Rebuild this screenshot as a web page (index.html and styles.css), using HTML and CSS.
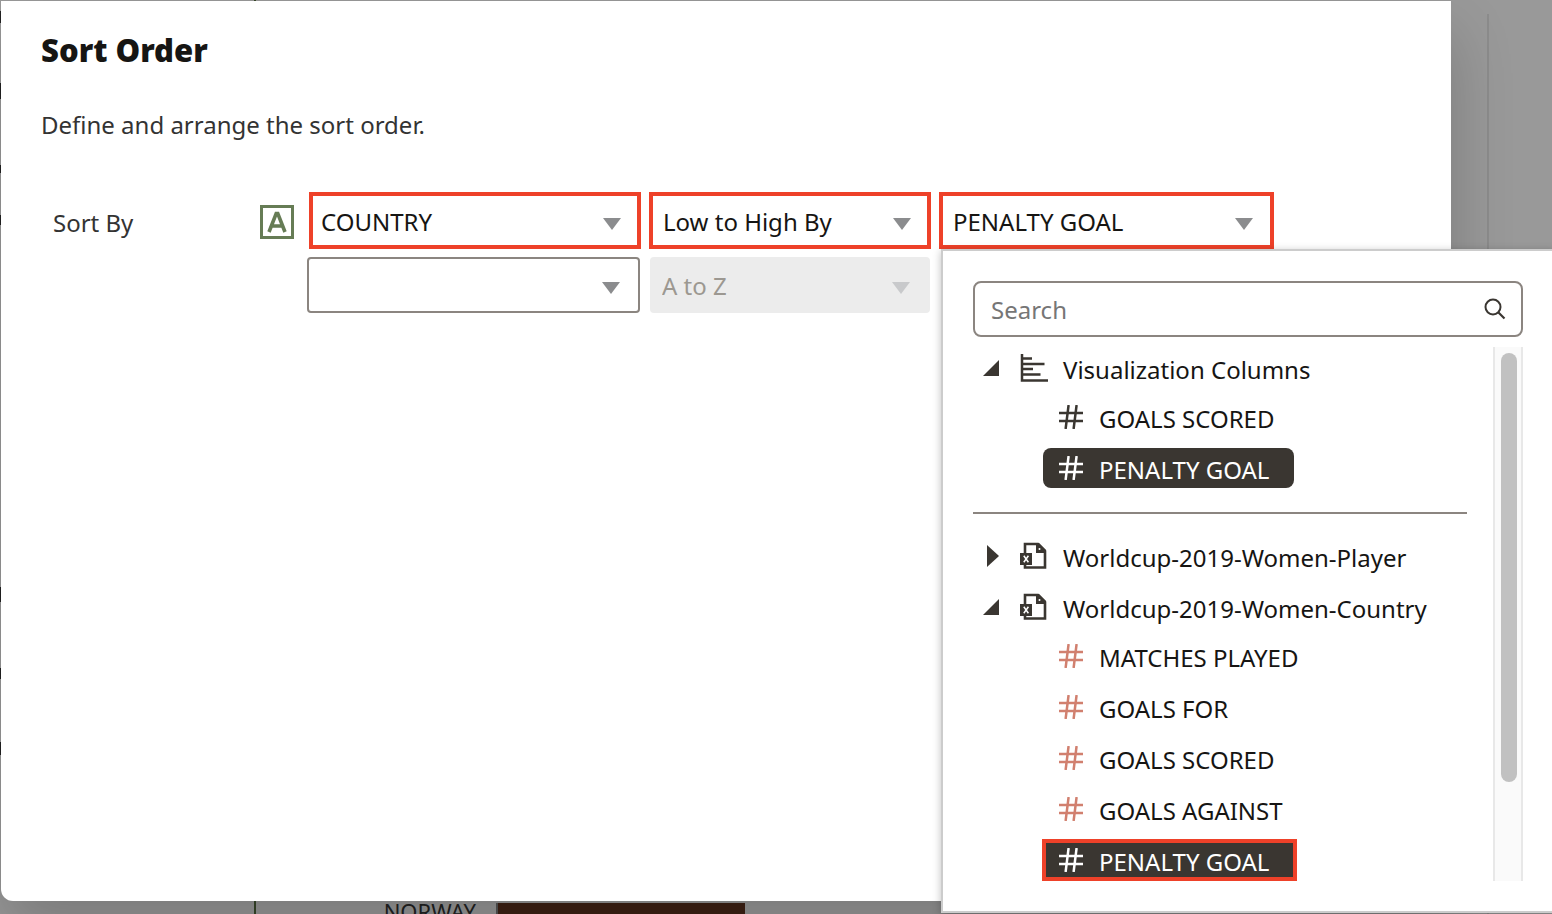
FILE: index.html
```html
<!DOCTYPE html>
<html lang="en">
<head>
<meta charset="utf-8">
<title>Sort Order</title>
<link rel="stylesheet" href="styles.css">
</head>
<body>
<svg class="sprite" aria-hidden="true">
  <symbol id="caret" viewBox="0 0 18 12"><path d="M0 0h18L9 12z" fill="currentColor"/></symbol>
  <symbol id="hash" viewBox="0 0 24 24"><path d="M0 8h24M0 16h24M9.600 0 6.600 24M17.600 0l-3 24" fill="none" stroke="currentColor" stroke-width="2.500"/></symbol>
  <symbol id="open" viewBox="0 0 16 16"><path d="M16 0v16H0z" fill="currentColor"/></symbol>
  <symbol id="closed" viewBox="0 0 16 22"><path d="M4 0v22l12-11z" fill="currentColor"/></symbol>
  <symbol id="sheet" viewBox="0 0 28 28">
    <path d="M5 12V2h13l7 7v16.500H5V22" fill="none" stroke="currentColor" stroke-width="2.600"/>
    <path d="M16 1v10h10v-3L19 1z" fill="currentColor"/>
    <circle cx="19.500" cy="7" r="1" fill="#fff"/>
    <path d="M0 11h12v12H0z" fill="currentColor"/>
    <path d="m3.800 13.800 4.600 6.400m0-6.400-4.600 6.400" stroke="#fff" stroke-width="1.500"/>
  </symbol>
</svg>

<div class="canvas" aria-hidden="true">
  <div class="edge"></div>
  <div class="axis"></div>
  <div class="chart"><span class="category">NORWAY</span><span class="bar"></span></div>
  <div class="panel-line"></div>
</div>

<main class="dialog" role="dialog" aria-labelledby="title">
  <h1 id="title" class="title">Sort Order</h1>
  <p class="intro">Define and arrange the sort order.</p>
  <form class="sort">
    <div class="row marked">
      <label class="row-label" for="column1">Sort By</label>
      <svg class="attribute" viewBox="0 0 34 34" aria-label="Attribute" role="img"><path d="M1.500 1.500h31v31h-31z" fill="none" stroke="currentColor" stroke-width="3"/><path d="M9 27 16.200 8.500h1.600L25 27M11.600 21h10.800" fill="none" stroke="currentColor" stroke-width="3.600"/></svg>
      <div class="field column"><select id="column1"><option>COUNTRY</option></select><svg class="caret"><use href="#caret"/></svg></div>
      <div class="field order"><select aria-label="Order"><option>Low to High By</option></select><svg class="caret"><use href="#caret"/></svg></div>
      <div class="field by"><select aria-label="Order by column"><option>PENALTY GOAL</option></select><svg class="caret"><use href="#caret"/></svg>
        <div class="popup">
          <div class="search">
            <input type="search" placeholder="Search" aria-label="Search">
            <svg class="lens" viewBox="0 0 22 22"><circle cx="9" cy="9" r="7.500" fill="none" stroke="currentColor" stroke-width="2"/><path d="m14.500 14.500 6 6" stroke="currentColor" stroke-width="2.200"/></svg>
          </div>
          <div class="results">
            <div class="tree">
              <div class="group">
                <button type="button" class="parent"><svg class="toggle"><use href="#open"/></svg><svg class="kind" viewBox="0 0 28 28"><path d="M2 0v26.500h26M2 4.500h10M2 10h22.500M2 15h11M2 20.500h18.500" fill="none" stroke="currentColor" stroke-width="2.500"/></svg><span class="name">Visualization Columns</span></button>
                <div class="children">
                  <button type="button" class="child"><svg class="hash"><use href="#hash"/></svg><span class="name">GOALS SCORED</span></button>
                  <button type="button" class="child selected"><svg class="hash"><use href="#hash"/></svg><span class="name">PENALTY GOAL</span></button>
                </div>
              </div>
              <hr class="divider">
              <div class="group data">
                <button type="button" class="parent"><svg class="toggle arrow"><use href="#closed"/></svg><svg class="kind"><use href="#sheet"/></svg><span class="name">Worldcup-2019-Women-Player</span></button>
                <button type="button" class="parent"><svg class="toggle"><use href="#open"/></svg><svg class="kind"><use href="#sheet"/></svg><span class="name">Worldcup-2019-Women-Country</span></button>
                <div class="children">
                  <button type="button" class="child"><svg class="hash"><use href="#hash"/></svg><span class="name">MATCHES PLAYED</span></button>
                  <button type="button" class="child"><svg class="hash"><use href="#hash"/></svg><span class="name">GOALS FOR</span></button>
                  <button type="button" class="child"><svg class="hash"><use href="#hash"/></svg><span class="name">GOALS SCORED</span></button>
                  <button type="button" class="child"><svg class="hash"><use href="#hash"/></svg><span class="name">GOALS AGAINST</span></button>
                  <button type="button" class="child selected flagged"><svg class="hash"><use href="#hash"/></svg><span class="name">PENALTY GOAL</span></button>
                </div>
              </div>
            </div>
            <div class="track"><div class="thumb"></div></div>
          </div>
        </div>
      </div>
    </div>
    <div class="row plain">
      <div class="field column"><select aria-label="Second column"><option></option></select><svg class="caret"><use href="#caret"/></svg></div>
      <div class="field order"><select aria-label="Second order" disabled><option>A to Z</option></select><svg class="caret"><use href="#caret"/></svg></div>
    </div>
  </form>
</main>
</body>
</html>
```
FILE: styles.css
```css
* { box-sizing: border-box; }
html, body { height: 100%; }
body {
  margin: 0;
  overflow: hidden;
  position: relative;
  background: #999;
  color: #161513;
  font: 24px/32px "Noto Sans", "Open Sans", sans-serif;
}
button, input, select { font: inherit; color: inherit; }
svg { flex: none; display: block; }
.sprite { position: absolute; width: 0; height: 0; }

/* Dimmed page behind the dialog */
.canvas { height: 100%; display: flex; align-items: stretch; }
.edge {
  width: 254px;
  background:
    linear-gradient(#222, #222) 0 11px / 1px 12px,
    linear-gradient(#222, #222) 0 83px / 1px 16px,
    linear-gradient(#222, #222) 0 165px / 1px 8px,
    linear-gradient(#222, #222) 0 215px / 1px 10px,
    linear-gradient(#222, #222) 0 587px / 1px 15px,
    linear-gradient(#222, #222) 0 668px / 1px 11px,
    linear-gradient(#222, #222) 0 742px / 1px 13px;
  background-repeat: no-repeat;
}
.axis { width: 2px; background: #38472a; }
.chart { flex: 1; display: flex; align-items: flex-end; }
.category { width: 240px; height: 15px; padding-right: 20px; text-align: right; font-size: 22px; line-height: 24px; color: #222; }
.bar { width: 249px; height: 11px; background: #3f2114; border-left: 2px solid #555; }
.panel-line { width: 2px; margin: 14px 63px 0 0; background: #8c8c8c; }

.dialog {
  position: absolute;
  inset: 1px 101px 13px 1px;
  padding: 27px 40px;
  background: #fff;
  border-radius: 0 0 12px 12px;
  box-shadow: 0 32px 64px rgba(0, 0, 0, .2);
}
.title { margin: 0; font-size: 31px; line-height: 44px; font-weight: 900; }
.intro { margin: 37px 0 0; color: #333; }

.sort { margin-top: 51px; }
.row { display: flex; }
.marked { align-items: center; gap: 8px; }
.row-label { width: 199px; margin-left: 12px; padding-top: 4px; color: #333; }
.attribute { width: 34px; height: 34px; margin: 3px 7px 0 0; color: #667c55; }
.field { position: relative; }
.field select {
  display: block;
  width: 100%;
  height: 56px;
  margin: 0;
  padding: 2px 8px 0 10px;
  appearance: none;
  background: #fff;
  border: 2px solid #8b8580;
  border-radius: 4px;
}
.caret { position: absolute; right: 20px; top: 25px; width: 18px; height: 12px; color: #8b8c8e; pointer-events: none; }
.marked .caret { top: 26px; }
.marked select { height: 57px; padding: 3px 8px 0; border: 4px solid #ee4129; border-radius: 0; }
.marked .order select, .marked .by select { padding-left: 10px; }
.marked .column { width: 332px; }
.marked .order { width: 282px; }
.marked .by { width: 335px; }
.marked .by .caret { right: 21px; }
.plain { gap: 10px; margin: 8px 0 0 266px; }
.plain .column { width: 333px; }
.plain .order { width: 280px; }
.field select:disabled { background: #ececec; border-color: #ececec; color: #9c9891; opacity: 1; }
.field select:disabled + .caret { color: #c8c9cb; }

.popup {
  position: absolute;
  z-index: 2;
  top: 100%;
  left: 2px;
  width: 614px;
  padding: 30px;
  background: #fff;
  border: 2px solid #ccc;
  box-shadow: 0 2px 8px rgba(0, 0, 0, .25);
}
.search { position: relative; }
.search input {
  display: block;
  width: 100%;
  height: 56px;
  padding: 0 60px 0 16px;
  appearance: none;
  background: #fff;
  border: 2px solid #8b8580;
  border-radius: 8px;
}
.search input::placeholder { color: #767676; opacity: 1; }
.lens { position: absolute; right: 17px; top: 17px; width: 22px; height: 22px; color: #3a3631; }

.results { display: flex; margin-top: 10px; }
.tree { flex: 1; padding: 1px 26px 1px 0; }
.track { width: 30px; padding: 6px; background: #fafafa; border: solid #e8e8e8; border-width: 0 2px; }
.thumb { width: 16px; height: 429px; border-radius: 8px; background: #c1c1c1; }
.parent, .child {
  display: flex;
  align-items: center;
  height: 40px;
  padding: 0;
  border: 0;
  background: none;
  white-space: nowrap;
}
.name { padding-top: 3px; }
.parent { padding-left: 10px; }
.toggle { width: 16px; height: 16px; margin-right: 21px; color: #3a3631; }
.arrow { height: 22px; }
.kind { width: 28px; height: 28px; margin-right: 15px; color: #3a3631; }
.children { display: flex; flex-direction: column; align-items: flex-start; gap: 11px; margin: 9px 0 0 70px; }
.child { min-width: 251px; padding: 0 20px 0 16px; border-radius: 8px; }
.hash { width: 24px; height: 24px; margin-right: 16px; color: #3a3631; }
.data .hash { color: #d1806f; }
.selected, .selected .hash, .data .selected .hash { color: #fff; }
.selected { background: #3a3631; }
.flagged { min-width: 253px; border-radius: 0; outline: 4px solid #ee4129; outline-offset: -3px; }
.parent + .parent { margin-top: 11px; }
.divider { height: 2px; margin: 24px 0 22px; border: 0; background: #8b8580; }
```
